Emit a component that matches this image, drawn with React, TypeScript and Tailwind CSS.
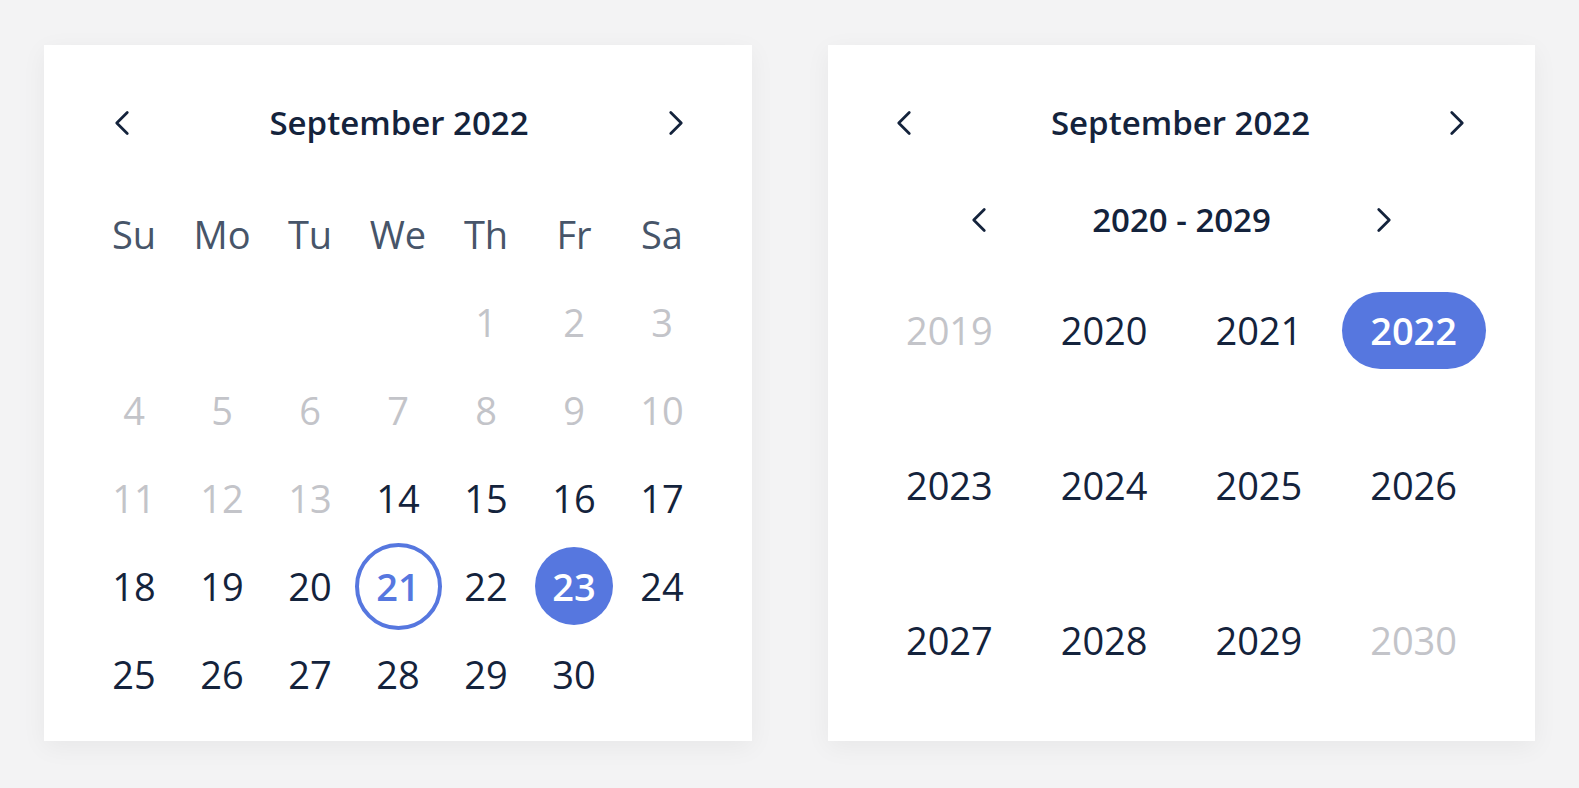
import { ChevronLeft, ChevronRight } from "lucide-react";

const FONT = "'Open Sans', 'Noto Sans', sans-serif";

type Day = { n: number | null; muted?: boolean; ring?: boolean; fill?: boolean };

const DAY_NAMES = ["Su", "Mo", "Tu", "We", "Th", "Fr", "Sa"];

const DAYS: Day[] = [
  { n: null }, { n: null }, { n: null }, { n: null },
  { n: 1, muted: true }, { n: 2, muted: true }, { n: 3, muted: true },
  { n: 4, muted: true }, { n: 5, muted: true }, { n: 6, muted: true }, { n: 7, muted: true },
  { n: 8, muted: true }, { n: 9, muted: true }, { n: 10, muted: true },
  { n: 11, muted: true }, { n: 12, muted: true }, { n: 13, muted: true },
  { n: 14 }, { n: 15 }, { n: 16 }, { n: 17 },
  { n: 18 }, { n: 19 }, { n: 20 }, { n: 21, ring: true }, { n: 22 }, { n: 23, fill: true }, { n: 24 },
  { n: 25 }, { n: 26 }, { n: 27 }, { n: 28 }, { n: 29 }, { n: 30 }, { n: null },
];

const YEARS = [
  { y: 2019, muted: true }, { y: 2020 }, { y: 2021 }, { y: 2022, active: true },
  { y: 2023 }, { y: 2024 }, { y: 2025 }, { y: 2026 },
  { y: 2027 }, { y: 2028 }, { y: 2029 }, { y: 2030, muted: true },
];

function NavRow({ label, className }: { label: string; className: string }) {
  return (
    <div className={`flex items-center justify-between ${className}`}>
      <button type="button" className="flex h-[42px] w-[42px] items-center justify-center text-[#14233c]">
        <ChevronLeft className="h-[42px] w-[42px]" strokeWidth={1.6} />
      </button>
      <span className="text-[33px] font-semibold text-[#14233c]">{label}</span>
      <button type="button" className="flex h-[42px] w-[42px] items-center justify-center text-[#14233c]">
        <ChevronRight className="h-[42px] w-[42px]" strokeWidth={1.6} />
      </button>
    </div>
  );
}

function DayCell({ day }: { day: Day }) {
  if (day.n === null) return <div />;
  let inner = "text-[#14233c]";
  if (day.muted) inner = "text-[#c3c4c9]";
  if (day.ring)
    inner = "h-[87px] w-[87px] rounded-full border-[4px] border-[#5677df] font-semibold text-[#5677df]";
  if (day.fill) inner = "h-[78px] w-[78px] rounded-full bg-[#5677df] font-semibold text-white";
  return (
    <div className="flex items-center justify-center">
      <span className={`flex items-center justify-center ${inner}`}>{day.n}</span>
    </div>
  );
}

export default function App() {
  return (
    <div
      className="flex min-h-[788px] gap-[76px] bg-[#f3f3f4] pl-[44px] pt-[45px]"
      style={{ fontFamily: FONT }}
    >
      {/* Day view */}
      <div className="h-[696px] w-[708px] bg-white pt-[34px] shadow-[0_6px_24px_rgba(0,0,0,0.05)]">
        <NavRow label="September 2022" className="h-[88px] pl-[57px] pr-[55px]" />
        <div className="mt-[23px] grid grid-cols-[repeat(7,88px)] auto-rows-[88px] pl-[46px] text-[38px]">
          {DAY_NAMES.map((d) => (
            <div key={d} className="flex items-center justify-center text-[#475569]">
              {d}
            </div>
          ))}
          {DAYS.map((d, i) => (
            <DayCell key={i} day={d} />
          ))}
        </div>
      </div>

      {/* Year view */}
      <div className="h-[696px] w-[707px] bg-white pt-[34px] shadow-[0_6px_24px_rgba(0,0,0,0.05)]">
        <NavRow label="September 2022" className="h-[88px] pl-[55px] pr-[57px]" />
        <NavRow label="2020 - 2029" className="h-[86px] px-[130px] pt-[20px]" />
        <div className="grid grid-cols-4 auto-rows-[155px] px-[44px] text-[38px]">
          {YEARS.map((y) => (
            <div key={y.y} className="flex items-center justify-center">
              {y.active ? (
                <span className="flex h-[77px] w-[144px] items-center justify-center rounded-full bg-[#5677df] font-semibold text-white">
                  {y.y}
                </span>
              ) : (
                <span className={y.muted ? "text-[#c3c4c9]" : "text-[#14233c]"}>{y.y}</span>
              )}
            </div>
          ))}
        </div>
      </div>
    </div>
  );
}
